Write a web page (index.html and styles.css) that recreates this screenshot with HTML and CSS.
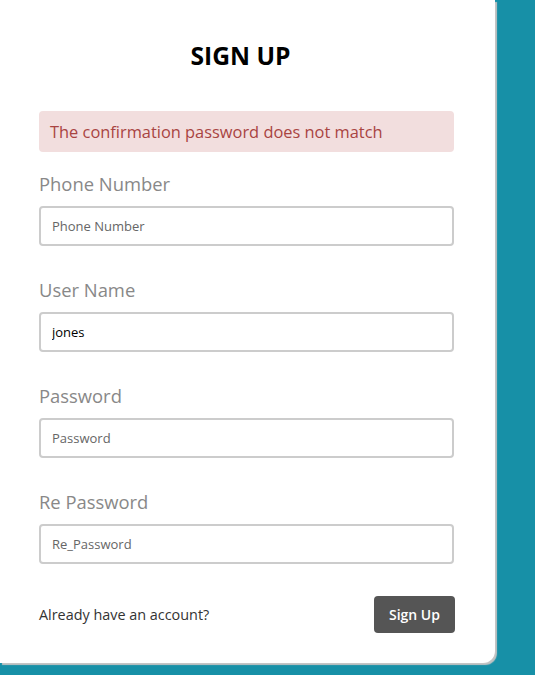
FILE: index.html
```html
<!DOCTYPE html>
<html>
<head>
<meta charset="utf-8">
<link rel="stylesheet" href="styles.css">
</head>
<body>
<div class="card">
  <h1 class="title">SIGN UP</h1>
  <div class="alert">The confirmation password does not match</div>
  <div class="group">
    <label class="label">Phone Number</label>
    <input class="input" type="text" placeholder="Phone Number">
  </div>
  <div class="group">
    <label class="label">User Name</label>
    <input class="input" type="text" value="jones">
  </div>
  <div class="group">
    <label class="label">Password</label>
    <input class="input" type="password" placeholder="Password">
  </div>
  <div class="group">
    <label class="label">Re Password</label>
    <input class="input" type="password" placeholder="Re_Password">
  </div>
  <div class="footer">
    <span class="note">Already have an account?</span>
    <button class="btn">Sign Up</button>
  </div>
</div>
</body>
</html>
```
FILE: styles.css
```css
html, body {
  margin: 0;
  padding: 0;
}
body {
  background: #1790a7;
  font-family: "Open Sans", "Noto Sans", sans-serif;
  height: 675px;
  overflow: hidden;
}
.card {
  width: 415px;
  background: #fff;
  padding: 38px 41px 30px 39px;
  border-radius: 0 0 12px 0;
  box-shadow: 2px 2px 1px #c4c4c4;
}
.title {
  margin: 0 0 37px;
  padding-right: 12px;
  text-align: center;
  font-size: 24.6px;
  line-height: 36px;
  font-weight: 700;
  color: #000;
}
.alert {
  height: 41px;
  box-sizing: border-box;
  background: #f2dede;
  color: #a94442;
  border-radius: 4px;
  padding: 0 11px;
  font-size: 16.4px;
  line-height: 41px;
  margin-bottom: 20px;
}
.group {
  margin-bottom: 32px;
}
.label {
  display: block;
  font-size: 18.4px;
  line-height: 24px;
  color: #888;
  margin-bottom: 10px;
}
.input {
  display: block;
  width: 100%;
  box-sizing: border-box;
  height: 40px;
  border: 2px solid #ccc;
  border-radius: 4px;
  padding: 0 11px;
  font-family: "Open Sans", "Noto Sans", sans-serif;
  font-size: 13px;
  color: #000;
  outline: none;
}
.input::placeholder {
  color: #666;
}
.footer {
  display: flex;
  justify-content: space-between;
  align-items: center;
}
.note {
  font-size: 14.4px;
  color: #333;
}
.btn {
  width: 81px;
  height: 37px;
  background: #555;
  color: #fff;
  border: none;
  border-radius: 4px;
  font-family: "Open Sans", "Noto Sans", sans-serif;
  font-size: 14px;
  font-weight: 600;
  margin-right: -1px;
}
```
